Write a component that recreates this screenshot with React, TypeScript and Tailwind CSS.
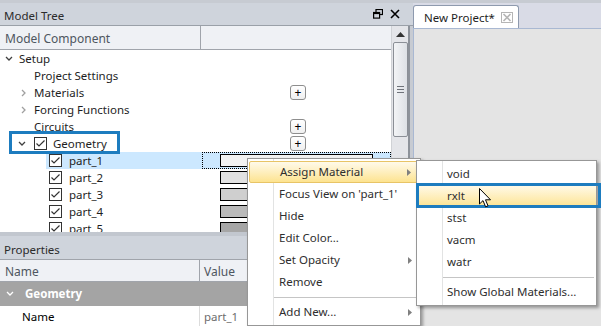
import React from 'react'

// Model tree rows
const treeRows = [
  { label: 'Setup', pad: 'pl-[5px]', chevron: 'down' },
  { label: 'Project Settings', pad: 'pl-[34px]' },
  { label: 'Materials', pad: 'pl-[20px]', chevron: 'right', plus: true },
  { label: 'Forcing Functions', pad: 'pl-[20px]', chevron: 'right' },
  { label: 'Circuits', pad: 'pl-[34px]', plus: true },
  { label: 'Geometry', pad: 'pl-[18px]', chevron: 'down', check: true, plus: true },
  { label: 'part_1', pad: 'pl-[46px]', part: true, swatch: 'bg-[#f2f2f2]', selected: true },
  { label: 'part_2', pad: 'pl-[46px]', part: true, swatch: 'bg-[#e1e1e1]' },
  { label: 'part_3', pad: 'pl-[46px]', part: true, swatch: 'bg-[#cfcfcf]' },
  { label: 'part_4', pad: 'pl-[46px]', part: true, swatch: 'bg-[#bababa]' },
  { label: 'part_5', pad: 'pl-[46px]', part: true, swatch: 'bg-[#a6a6a6]' },
]

const menuItems = [
  { label: 'Assign Material', sub: true, active: true },
  { label: "Focus View on 'part_1'" },
  { label: 'Hide' },
  { label: 'Edit Color...' },
  { label: 'Set Opacity', sub: true },
  { label: 'Remove' },
  { sep: true },
  { label: 'Add New...', sub: true },
]

const materials = [
  { label: 'void' },
  { label: 'rxlt', active: true },
  { label: 'stst' },
  { label: 'vacm' },
  { label: 'watr' },
  { sep: true },
  { label: 'Show Global Materials...' },
]

function Chevron({ dir, className }: { dir: string; className?: string }) {
  return (
    <svg width="8" height="8" viewBox="0 0 8 8" className={className}>
      {dir === 'down' ? (
        <polyline points="1,2 4,5 7,2" fill="none" stroke="currentColor" strokeWidth="1.3" />
      ) : (
        <polyline points="2,1 5,4 2,7" fill="none" stroke="currentColor" strokeWidth="1.3" />
      )}
    </svg>
  )
}

function CheckBox() {
  return (
    <svg width="13" height="13" viewBox="0 0 13 13" className="shrink-0">
      <rect x="0.5" y="0.5" width="12" height="12" fill="#fff" stroke="#333" />
      <polyline points="2.5,6.5 5,9 10.5,3.5" fill="none" stroke="#333" strokeWidth="1.2" />
    </svg>
  )
}

function PlusButton() {
  return (
    <div className="ml-[88px] w-[16px] h-[15px] rounded-[3px] border border-[#8e8e8e] bg-gradient-to-b from-white to-[#f0f0f0] flex items-center justify-center text-[12px] leading-none text-black">
      +
    </div>
  )
}

function Arrow() {
  return (
    <svg width="4" height="7" viewBox="0 0 4 7">
      <polygon points="0,0 4,3.5 0,7" fill="#808080" />
    </svg>
  )
}

function Cursor() {
  return (
    <svg width="13" height="21" viewBox="0 0 13 21">
      <path d="M0.5 0.5 L0.5 16 L4 12.6 L6.6 18.8 L9 17.8 L6.5 11.8 L11.5 11.8 Z" fill="#fff" stroke="#000" strokeWidth="1" strokeLinejoin="round" />
    </svg>
  )
}

export default function App() {
  return (
    <div className="w-[601px] h-[326px] relative overflow-hidden bg-[#c7cbd2] pt-[3px] font-['Segoe_UI','Noto_Sans',sans-serif] text-[11.5px] text-[#1e1e1e]">
      <div className="flex h-[323px]">
        {/* Left dock */}
        <div className="w-[413px] flex flex-col">
          {/* Model Tree */}
          <div className="h-[23px] shrink-0 bg-[#cfd4dc] flex items-center px-[4px] pt-[3px] border-b border-[#9aa0a8]">
            <span className="text-[#2b2b2b]">Model Tree</span>
            <div className="ml-auto flex items-center gap-[7px] pr-[9px] -mt-[3px]">
              <svg width="10" height="10" viewBox="0 0 10 10">
                <rect x="3" y="0.5" width="6.5" height="5" fill="none" stroke="#000" strokeWidth="1.2" />
                <rect x="0.6" y="3.5" width="6" height="5.6" fill="#cfd4dc" stroke="#000" strokeWidth="1.2" />
                <rect x="0.6" y="3.5" width="6" height="1.6" fill="#000" />
              </svg>
              <svg width="10" height="10" viewBox="0 0 10 10">
                <path d="M1 1 L9 9 M9 1 L1 9" stroke="#000" strokeWidth="1.6" />
              </svg>
            </div>
          </div>
          <div className="h-[206px] shrink-0 flex">
            <div className="w-[391px] flex flex-col bg-white overflow-hidden">
              <div className="h-[24px] shrink-0 flex bg-[#eff1f5] border-b border-[#a0a4ab] text-[12px] text-[#4e5660]">
                <div className="w-[201px] border-r border-[#a0a4ab] flex items-center pl-[5px] pt-[2px]">Model Component</div>
                <div className="flex-1" />
              </div>
              {treeRows.map((r) => (
                <div key={r.label} className="h-[17px] flex shrink-0">
                  <div className={`w-[202px] flex items-center ${r.pad}`}>
                    {r.chevron === 'down' && (
                      <div className={r.check ? 'w-[16px]' : 'w-[14px]'}>
                        <Chevron dir="down" className="text-[#404040]" />
                      </div>
                    )}
                    {r.chevron === 'right' && (
                      <div className="w-[14px]">
                        <Chevron dir="right" className="text-[#a0a0a0]" />
                      </div>
                    )}
                    {r.part ? (
                      <div className={`flex-1 h-full flex items-center pl-[3px] ${r.selected ? 'bg-[#cce8ff]' : ''}`}>
                        <CheckBox />
                        <span className="ml-[7px]">{r.label}</span>
                      </div>
                    ) : r.check ? (
                      <>
                        <CheckBox />
                        <span className="ml-[6px]">{r.label}</span>
                      </>
                    ) : (
                      <span>{r.label}</span>
                    )}
                  </div>
                  <div
                    className={`flex-1 flex items-center ${
                      r.selected ? 'bg-[#cce8ff] border border-dotted border-black' : ''
                    }`}
                  >
                    {r.plus && <PlusButton />}
                    {r.swatch && (
                      <div className={`${r.selected ? 'ml-[17px]' : 'ml-[18px]'} w-[153px] h-[13px] border-[1.5px] border-black ${r.swatch}`} />
                    )}
                  </div>
                </div>
              ))}
            </div>
            {/* Scrollbar */}
            <div className="w-[17px] bg-[#e4e5e9] border-l border-[#d0d2d6] flex flex-col items-center">
              <div className="h-[16px] flex items-center justify-center">
                <svg width="9" height="5" viewBox="0 0 9 5">
                  <polygon points="0,5 4.5,0 9,5" fill="#333" />
                </svg>
              </div>
              <div className="w-[15px] h-[95px] rounded-[2px] border border-[#8b8f96] bg-gradient-to-r from-[#f3f4f6] to-[#dde0e5] flex flex-col items-center justify-center gap-[2px]">
                <div className="w-[7px] h-px bg-[#6e7279]" />
                <div className="w-[7px] h-px bg-[#6e7279]" />
                <div className="w-[7px] h-px bg-[#6e7279]" />
              </div>
            </div>
            <div className="w-[2px] bg-[#8d929a]" />
          </div>
          {/* Properties */}
          <div className="h-[4px] shrink-0 bg-[#c2c7cf]" />
          <div className="h-[23px] shrink-0 bg-[#cfd4dc] flex items-center px-[4px] pt-[4px] text-[#2b2b2b]">Properties</div>
          <div className="h-[23px] shrink-0 flex bg-[#eff1f5] border-y border-[#a0a4ab] text-[12px] text-[#4e5660]">
            <div className="w-[200px] border-r border-[#a0a4ab] flex items-center pl-[5px] pt-[3px]">Name</div>
            <div className="flex items-center pl-[4px] pt-[3px]">Value</div>
          </div>
          <div className="h-[24px] shrink-0 bg-[#a4a4a4] flex items-center pl-[6px] text-white font-bold">
            <Chevron dir="down" className="text-white" />
            <span className="ml-[11px]">Geometry</span>
          </div>
          <div className="flex-1 flex bg-white">
            <div className="w-[200px] border-r border-[#dcdcdc] flex items-center pl-[22px] pt-[1px] text-black">Name</div>
            <div className="flex items-center pl-[4px] pt-[1px] text-[#6d6d6d]">part_1</div>
          </div>
        </div>

        {/* Document area */}
        <div className="flex-1 flex flex-col">
          <div className="h-[25px] shrink-0 bg-[#d9dbe6] flex items-end pt-[1px]">
            <div className="w-[106px] h-[24px] -mb-px bg-white rounded-t-[3px] border border-b-0 border-[#8e9aae] flex items-center pl-[10px] gap-[6px] text-[#1e1e1e]">
              <span>New Project*</span>
              <svg width="12" height="11" viewBox="0 0 12 11">
                <rect x="0.5" y="0.5" width="11" height="10" fill="none" stroke="#b5b5b5" />
                <path d="M2.5 2 L9.5 9 M9.5 2 L2.5 9" stroke="#b5b5b5" strokeWidth="1.6" />
              </svg>
            </div>
          </div>
          <div className="flex-1 bg-[#e4e4e4] border-l border-t border-[#a9b8d2]" />
        </div>
      </div>

      {/* Geometry highlight */}
      <div className="absolute left-[9px] top-[131px] w-[111px] h-[23px] border-[3px] border-[#1d7cbf]" />

      {/* Context menu */}
      <div className="absolute left-[247px] top-[158px] w-[174px] bg-white border border-[#979797] shadow-[2px_2px_3px_rgba(0,0,0,0.35)] py-[2px] text-[#2e2e2e]">
        <div className="absolute left-[25px] top-0 bottom-0 w-px bg-[#e2e3e3]" />
        {menuItems.map((m, i) =>
          m.sep ? (
            <div key={i} className="h-[8px] flex items-center pl-[26px] pr-[2px]">
              <div className="h-px w-full bg-[#c5c5c5]" />
            </div>
          ) : (
            <div
              key={i}
              className={`relative h-[22px] mx-px flex items-center pl-[30px] pr-[7px] ${
                m.active ? 'bg-gradient-to-b from-[#fffaea] to-[#fde38f] border border-[#e8c466] rounded-[2px]' : ''
              }`}
            >
              <span>{m.label}</span>
              {m.sub && (
                <div className="ml-auto">
                  <Arrow />
                </div>
              )}
            </div>
          )
        )}
      </div>

      {/* Materials submenu */}
      <div className="absolute left-[416px] top-[160px] w-[181px] bg-white border border-[#979797] shadow-[2px_2px_3px_rgba(0,0,0,0.35)] py-[2px] text-[#2e2e2e]">
        <div className="absolute left-[25px] top-0 bottom-0 w-px bg-[#e2e3e3]" />
        {materials.map((m, i) =>
          m.sep ? (
            <div key={i} className="h-[8px] flex items-center pl-[26px] pr-[2px]">
              <div className="h-px w-full bg-[#c5c5c5]" />
            </div>
          ) : (
            <div
              key={i}
              className={`relative h-[22px] flex items-center pl-[30px] ${
                m.active ? 'bg-gradient-to-b from-[#fffaea] to-[#fde38f]' : ''
              }`}
            >
              {m.label}
            </div>
          )
        )}
      </div>
      <div className="absolute left-[416px] top-[183px] w-[185px] h-[25px] border-[3px] border-[#1d7cbf]" />
      <div className="absolute left-[479px] top-[188px]">
        <Cursor />
      </div>
    </div>
  )
}
